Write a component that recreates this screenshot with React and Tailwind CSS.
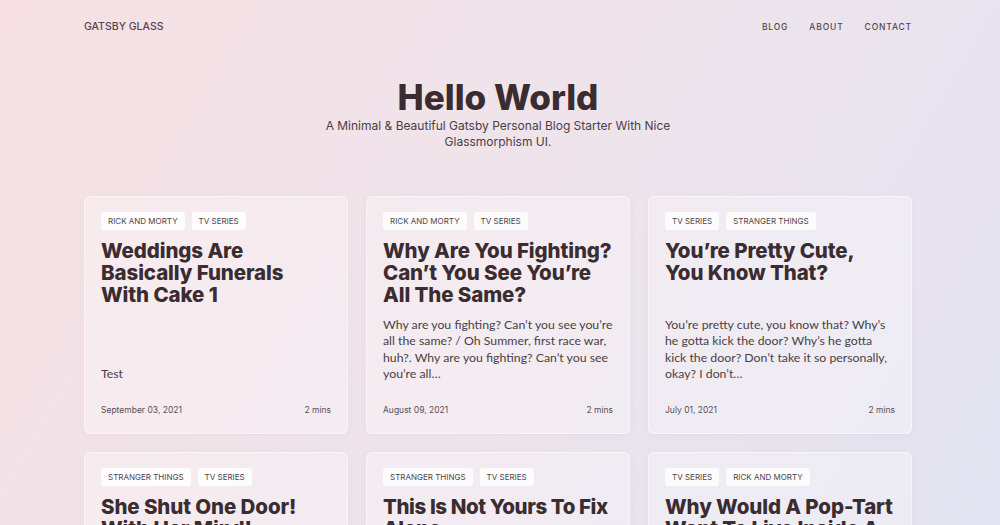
const posts = [
  {
    tags: ['Rick and Morty', 'TV Series'],
    title: 'Weddings Are Basically Funerals With Cake 1',
    excerpt: 'Test',
    date: 'September 03, 2021',
  },
  {
    tags: ['Rick and Morty', 'TV Series'],
    title: 'Why Are You Fighting? Can’t You See You’re All The Same?',
    excerpt:
      'Why are you fighting? Can’t you see you’re all the same? / Oh Summer, first race war, huh?. Why are you fighting? Can’t you see you’re all…',
    date: 'August 09, 2021',
  },
  {
    tags: ['TV Series', 'Stranger Things'],
    title: 'You’re Pretty Cute, You Know That?',
    excerpt:
      'You’re pretty cute, you know that? Why’s he gotta kick the door? Why’s he gotta kick the door? Don’t take it so personally, okay? I don’t…',
    date: 'July 01, 2021',
  },
  {
    tags: ['Stranger Things', 'TV Series'],
    title: 'She Shut One Door! With Her Mind!',
    excerpt: 'Test',
    date: 'June 12, 2021',
  },
  {
    tags: ['Stranger Things', 'TV Series'],
    title: 'This Is Not Yours To Fix Alone',
    excerpt: 'Test',
    date: 'May 20, 2021',
    tight: true,
  },
  {
    tags: ['TV Series', 'Rick and Morty'],
    title: 'Why Would A Pop-Tart Want To Live Inside A Toaster?',
    excerpt: 'Test',
    date: 'April 02, 2021',
  },
];

function PostCard({ post }) {
  return (
    <article className="flex flex-col rounded-md border border-white/50 bg-white/30 px-[16px] pt-[15px] pb-[17px] shadow-[0_1px_6px_rgba(120,90,110,0.06)]">
      <div className="flex gap-[7px]">
        {post.tags.map(t => (
          <span key={t} className="flex h-[18px] items-center rounded-[3px] bg-white/85 px-[7px] text-[8px] uppercase text-[#4f4549]">
            {t}
          </span>
        ))}
      </div>
      <h2
        className={
          'mt-[10px] text-[20.5px] font-extrabold leading-[22px] text-[#3a2c30] ' +
          (post.tight ? 'tracking-[-0.02em]' : 'tracking-[-0.005em]')
        }
      >
        {post.title}
      </h2>
      <p className="mt-auto pt-[11px] font-['Lato',sans-serif] text-[12.3px] leading-[16.3px] text-[#4a3f44]">{post.excerpt}</p>
      <div className="mt-[22px] flex justify-between text-[8.5px] leading-[12px] text-[#5a4f55]">
        <span>{post.date}</span>
        <span>2 mins</span>
      </div>
    </article>
  );
}

export default function App() {
  return (
    <div className="min-h-screen bg-[linear-gradient(120deg,#f7e1e4_0%,#eee4ec_50%,#e1e3f2_100%)] font-['Inter',sans-serif]">
      <div className="ml-[84px] w-[828px]">
        <header className="flex h-[54px] items-center justify-between">
          <a className="text-[10.5px] font-medium text-[#54474d]">GATSBY GLASS</a>
          <nav className="flex gap-[21px] text-[8.5px] font-medium tracking-[0.1em] text-[#54474d]">
            <a>BLOG</a>
            <a>ABOUT</a>
            <a>CONTACT</a>
          </nav>
        </header>
        <section className="flex flex-col items-center pt-[22px] text-center">
          <h1 className="text-[35px] font-extrabold leading-[42px] text-[#3a2c30]">Hello World</h1>
          <p className="w-[360px] text-[12px] leading-[16px] text-[#4a3f44]">
            A Minimal &amp; Beautiful Gatsby Personal Blog Starter With Nice Glassmorphism UI.
          </p>
        </section>
        <main className="mt-[46px] grid grid-cols-3 gap-[18px] pb-10">
          {posts.map(p => (
            <PostCard key={p.title} post={p} />
          ))}
        </main>
      </div>
    </div>
  );
}
